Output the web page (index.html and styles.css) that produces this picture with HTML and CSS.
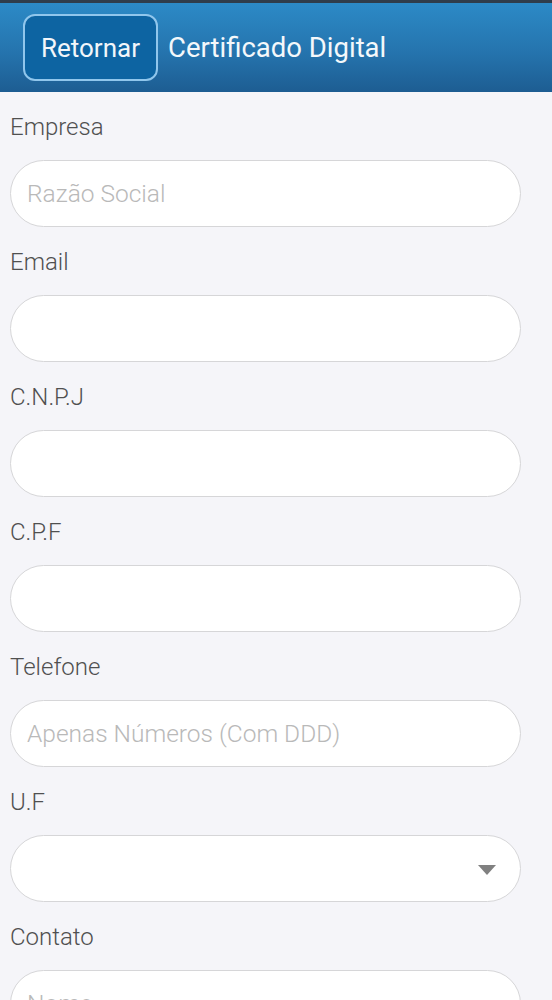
FILE: index.html
```html
<!DOCTYPE html>
<html lang="pt-BR">
<head>
<meta charset="utf-8">
<title>Certificado Digital</title>
<link rel="stylesheet" href="styles.css">
</head>
<body>
<header class="topbar">
  <button class="back-btn" type="button">Retornar</button>
  <h1 class="title">Certificado Digital</h1>
</header>
<form class="form">
  <div class="group">
    <label class="label">Empresa</label>
    <input class="field" type="text" placeholder="Razão Social">
  </div>
  <div class="group">
    <label class="label">Email</label>
    <input class="field" type="text">
  </div>
  <div class="group">
    <label class="label">C.N.P.J</label>
    <input class="field" type="text">
  </div>
  <div class="group">
    <label class="label">C.P.F</label>
    <input class="field" type="text">
  </div>
  <div class="group">
    <label class="label">Telefone</label>
    <input class="field" type="text" placeholder="Apenas Números (Com DDD)">
  </div>
  <div class="group">
    <label class="label">U.F</label>
    <div class="field select">
      <span class="caret"></span>
    </div>
  </div>
  <div class="group">
    <label class="label">Contato</label>
    <input class="field last" type="text" placeholder="Nome">
  </div>
</form>
</body>
</html>
```
FILE: styles.css
```css
html, body {
  margin: 0;
  padding: 0;
}
body {
  background: #f5f5f9;
  font-family: Roboto, "Liberation Sans", sans-serif;
  width: 552px;
  height: 1000px;
  overflow: hidden;
}
.topbar {
  box-sizing: border-box;
  height: 92px;
  border-top: 3px solid #2f3d4b;
  background: linear-gradient(to bottom, #2c8ac6 0%, #2574ae 55%, #1d5d92 100%);
  display: flex;
  align-items: center;
  padding: 0 0 0 23px;
  gap: 10px;
}
.back-btn {
  box-sizing: border-box;
  width: 135px;
  height: 67px;
  margin-top: 0;
  border: 2px solid #90c6ec;
  border-radius: 12px;
  background: #0d64a2;
  color: #f2f6fa;
  font-family: Roboto, "Liberation Sans", sans-serif;
  font-size: 26px;
  font-weight: 400;
  padding: 0;
}
.title {
  margin: 0;
  font-weight: 400;
  font-size: 27.5px;
  color: #f4f8fb;
}
.form {
  padding: 18px 0 0 10px;
}
.group {
  display: flex;
  flex-direction: column;
  margin-bottom: 18px;
}
.label {
  height: 34px;
  line-height: 34px;
  font-size: 24px;
  font-weight: 300;
  color: #505050;
  margin-bottom: 16px;
}
.field {
  box-sizing: border-box;
  width: 511px;
  height: 67px;
  border: 1.5px solid #d6d6d8;
  border-radius: 34px;
  background: #fff;
  padding: 0 16px;
  font-family: Roboto, "Liberation Sans", sans-serif;
  font-size: 24.5px;
  font-weight: 300;
  color: #333;
  outline: none;
}
.field::placeholder {
  color: #b9b9b9;
}
.select {
  display: flex;
  align-items: center;
  justify-content: flex-end;
  padding-right: 24px;
}
.caret {
  width: 0;
  height: 0;
  border-left: 9px solid transparent;
  border-right: 9px solid transparent;
  border-top: 10px solid #808080;
  margin-top: 2px;
}
```
